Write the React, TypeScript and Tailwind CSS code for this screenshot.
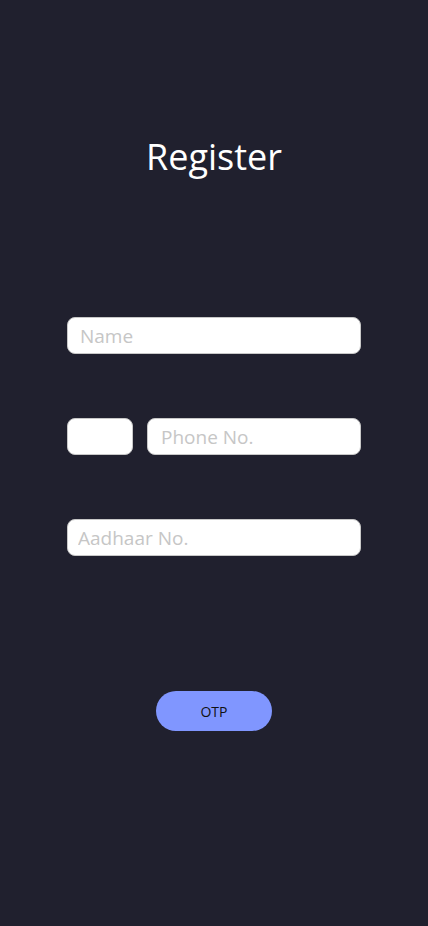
import React from "react";

export default function App() {
  const font = { fontFamily: '"Open Sans", "Noto Sans", sans-serif' };
  return (
    <div className="w-[428px] h-[926px] bg-[#20202e] flex flex-col items-center" style={font}>
      <h1 className="mt-[132px] text-[36px] leading-[50px] text-white font-normal">Register</h1>
      <div className="mt-[135px] w-[294px] flex flex-col">
        <input
          placeholder="Name"
          className="h-[37px] w-full rounded-[8px] border border-[#c8c8c8] bg-white px-[12px] text-[19px] text-black placeholder:text-[#c6c6c6] outline-none"
        />
        <div className="mt-[64px] flex gap-[14px]">
          <input className="h-[37px] w-[66px] rounded-[8px] border border-[#c8c8c8] bg-white px-[8px] text-[19px] outline-none" />
          <input
            placeholder="Phone No."
            className="h-[37px] flex-1 min-w-0 rounded-[8px] border border-[#c8c8c8] bg-white px-[13px] text-[19px] text-black placeholder:text-[#c6c6c6] outline-none"
          />
        </div>
        <input
          placeholder="Aadhaar No."
          className="mt-[64px] h-[37px] w-full rounded-[8px] border border-[#c8c8c8] bg-white px-[10px] text-[19px] text-black placeholder:text-[#c6c6c6] outline-none"
        />
      </div>
      <button className="mt-[135px] h-[40px] w-[116px] rounded-full bg-[#8096ff] text-[14px] text-[#111111]">
        OTP
      </button>
    </div>
  );
}
